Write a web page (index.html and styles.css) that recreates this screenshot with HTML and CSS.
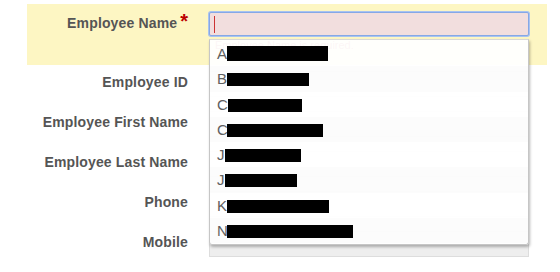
FILE: index.html
```html
<!DOCTYPE html>
<html>
<head>
<meta charset="utf-8">
<link rel="stylesheet" href="styles.css">
</head>
<body>
<form class="form">
  <div class="row row-error">
    <label class="label">Employee Name<span class="req">*</span></label>
    <div class="field">
      <div class="input input-focus"><span class="caret"></span></div>
      <div class="error-msg">Employee Name is required.</div>
      <ul class="dropdown">
        <li class="item">A<span class="redact r-a"></span></li>
        <li class="item">B<span class="redact r-b"></span></li>
        <li class="item">C<span class="redact r-c1"></span></li>
        <li class="item">C<span class="redact r-c2"></span></li>
        <li class="item">J<span class="redact r-j1"></span></li>
        <li class="item">J<span class="redact r-j2"></span></li>
        <li class="item">K<span class="redact r-k"></span></li>
        <li class="item">N<span class="redact r-n"></span></li>
      </ul>
    </div>
  </div>
  <div class="row">
    <label class="label">Employee ID</label>
    <div class="field"><div class="input"></div></div>
  </div>
  <div class="row">
    <label class="label">Employee First Name</label>
    <div class="field"><div class="input"></div></div>
  </div>
  <div class="row">
    <label class="label">Employee Last Name</label>
    <div class="field"><div class="input"></div></div>
  </div>
  <div class="row">
    <label class="label">Phone</label>
    <div class="field"><div class="input"></div></div>
  </div>
  <div class="row">
    <label class="label">Mobile</label>
    <div class="field"><div class="input"></div></div>
  </div>
</form>
</body>
</html>
```

FILE: styles.css
```css
html, body {
  margin: 0;
  padding: 0;
  background: #ffffff;
  font-family: "Liberation Sans", Arial, sans-serif;
}

.form {
  margin: 4px 0 0 27px;
  width: 520px;
}

.row {
  display: grid;
  grid-template-columns: 161px 320px;
  column-gap: 21px;
  padding-right: 18px;
  height: 40px;
}

.row-error {
  background: #fdf6c3;
  height: 61px;
}

.label {
  text-align: right;
  font-weight: bold;
  font-size: 14px;
  line-height: 16px;
  letter-spacing: 0.15px;
  color: #555555;
  padding-top: 9px;
  white-space: nowrap;
}

.row-error .label {
  padding-top: 11px;
}

.req {
  color: #bb0000;
  font-size: 20px;
  line-height: 0;
  margin-left: 3px;
  letter-spacing: 0;
}

.field {
  position: relative;
}

.input {
  box-sizing: border-box;
  width: 320px;
  height: 26px;
  margin-top: 6px;
  background: #eeeeee;
  border: 1px solid #dddddd;
}

.input-focus {
  height: 24px;
  margin-top: 8px;
  background: #f2dede;
  border: 1px solid #86a8e6;
  border-radius: 2px;
  box-shadow: 0 0 0 1px #a9c3f0;
  display: flex;
  align-items: center;
  padding-left: 4px;
}

.caret {
  width: 1px;
  height: 17px;
  background: #cc3333;
}

.error-msg {
  margin-top: 3px;
  padding-left: 6px;
  font-size: 11px;
  line-height: 13px;
  color: #b94a48;
}

.dropdown {
  position: absolute;
  left: 0;
  top: 35px;
  z-index: 5;
  box-sizing: border-box;
  width: 320px;
  height: 206px;
  margin: 0;
  padding: 1px 0 0 0;
  list-style: none;
  background: rgba(255, 255, 255, 0.95);
  border: 1px solid #c6c6c6;
  border-top-color: #d8d8d8;
  border-radius: 0 0 3px 3px;
  box-shadow: 1px 2px 3px rgba(0, 0, 0, 0.28);
}

.item {
  height: 25.3px;
  line-height: 25.3px;
  padding-left: 7px;
  font-size: 15px;
  color: #606060;
  white-space: nowrap;
}

.item:nth-child(even) {
  background: rgba(0, 0, 0, 0.012);
}

.redact {
  display: inline-block;
  height: 13px;
  background: #000000;
  vertical-align: -2px;
}

.r-a { width: 101px; height: 15px; margin-left: 0; }
.r-b { width: 82px; margin-left: 0; }
.r-c1 { width: 74px; margin-left: 0; }
.r-c2 { width: 96px; margin-left: -1px; }
.r-j1 { width: 76px; margin-left: 0; }
.r-j2 { width: 72px; margin-left: 0; }
.r-k { width: 102px; margin-left: 0; }
.r-n { width: 126px; margin-left: -1px; }
```
